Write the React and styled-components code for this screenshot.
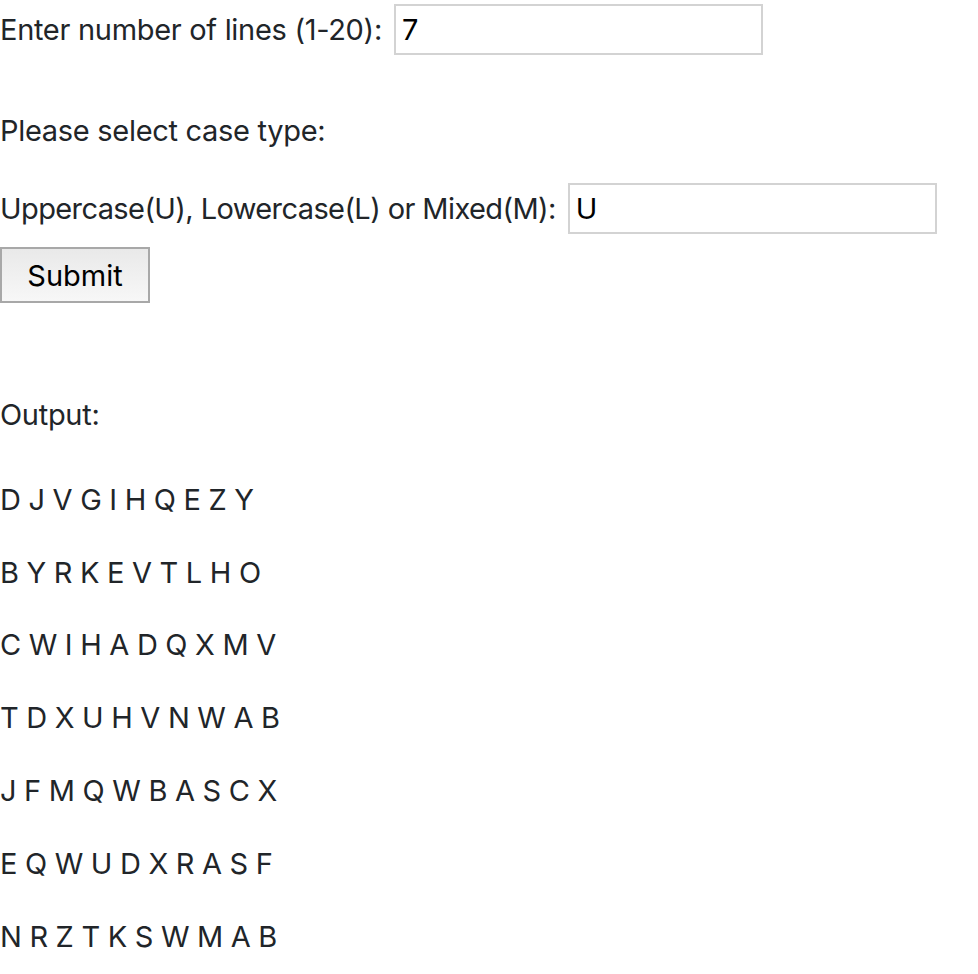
import React from 'react';
import styled, { createGlobalStyle } from 'styled-components';

const GlobalStyle = createGlobalStyle`
	body {
		margin: 0;
		background: #fff;
		font-family: Inter, "Liberation Sans", sans-serif;
		color: #212529;
	}
`;

const Page = styled.div`
	display: flex;
	flex-direction: column;
	font-size: 29px;
	letter-spacing: -0.3px;
`;

const Field = styled.label`
	display: flex;
	align-items: center;
	gap: 12px;
	height: ${({ h }) => h}px;
	margin-top: ${({ top }) => top || 0}px;
	letter-spacing: ${({ tight }) => (tight ? '-0.6px' : 'inherit')};
`;

const TextInput = styled.input`
	box-sizing: border-box;
	width: 369px;
	height: 51px;
	border: 2px solid #d3d3d3;
	padding: 0 6px;
	font: inherit;
	color: #000;
	letter-spacing: 0;
	outline: none;
`;

const Line = styled.div`
	height: ${({ h }) => h}px;
	display: flex;
	align-items: center;
	margin-top: ${({ top }) => top || 0}px;
`;

const SubmitButton = styled.button`
	box-sizing: border-box;
	width: 150px;
	height: 56px;
	margin-top: 11px;
	border: 2px solid #a8a8a8;
	background: linear-gradient(#e9e9e9, #f7f7f7);
	font: inherit;
	color: #000;
	padding: 0;
	align-self: flex-start;
`;

const Rows = styled.div`
	display: flex;
	flex-direction: column;
	margin-top: 24px;
`;

const Row = styled.div`
	height: 72.8px;
	display: flex;
	align-items: center;
	white-space: pre;
`;

const rows = [
	'D J V G I H Q E Z Y',
	'B Y R K E V T L H O',
	'C W I H A D Q X M V',
	'T D X U H V N W A B',
	'J F M Q W B A S C X',
	'E Q W U D X R A S F',
	'N R Z T K S W M A B',
];

export default function App() {
	return (
		<>
			<GlobalStyle />
			<Page>
				<Field h={56} top={1}>
					Enter number of lines (1-20):
					<TextInput defaultValue="7" />
				</Field>
				<Line h={50} top={48}>Please select case type:</Line>
				<Field h={56} top={25} tight>
					Uppercase(U), Lowercase(L) or Mixed(M):
					<TextInput defaultValue="U" />
				</Field>
				<SubmitButton>Submit</SubmitButton>
				<Line h={50} top={86}>Output:</Line>
				<Rows>
					{rows.map((r) => (
						<Row key={r}>{r}</Row>
					))}
				</Rows>
			</Page>
		</>
	);
}
